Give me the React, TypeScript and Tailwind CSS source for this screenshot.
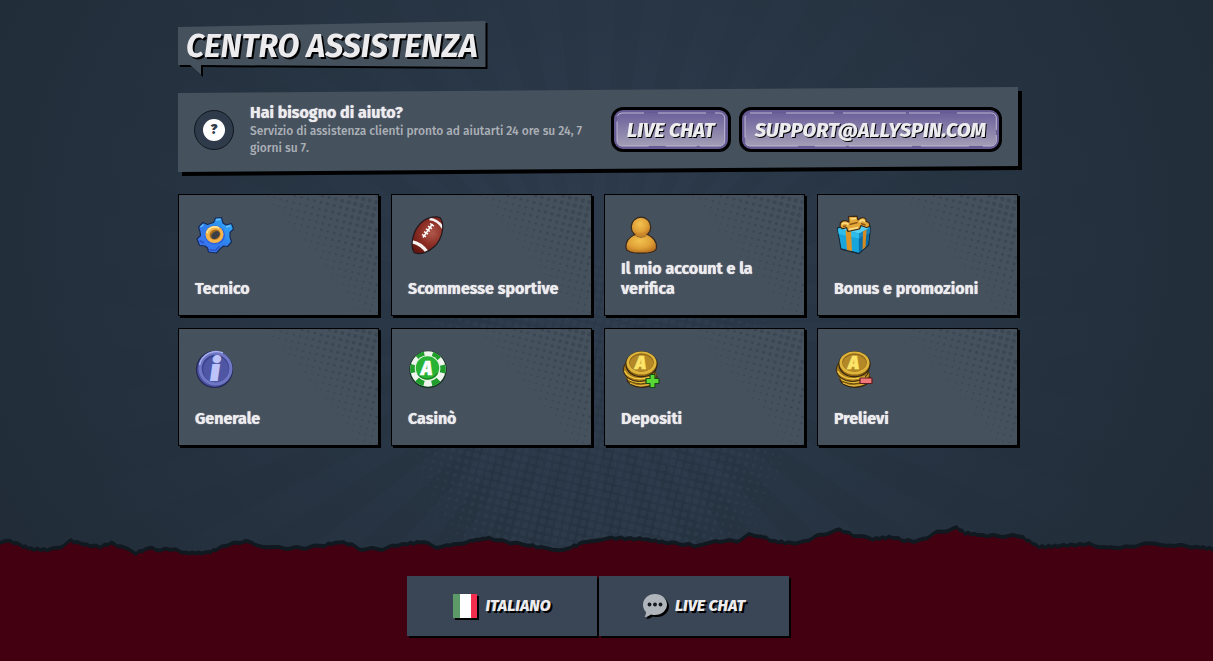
import type { ReactNode } from "react";

// one wedge every 10 degrees, fanned out from the centre of the page
const RAYS = Array.from({ length: 36 }, (_, i) => {
  const from = ((i * 10 - 2) * Math.PI) / 180;
  const to = ((i * 10 + 3) * Math.PI) / 180;
  const at = (a: number) => `${(598 + Math.cos(a) * 900).toFixed(1)},${(330 + Math.sin(a) * 900).toFixed(1)}`;
  return `598,330 ${at(from)} ${at(to)}`;
});

type Dot = { x: number; y: number; r: number };

function halftone(width: number, height: number, pitch: number, radius: (x: number, y: number) => number) {
  const dots: Dot[] = [];
  const c = Math.cos(0.24);
  const s = Math.sin(0.24);
  const n = Math.ceil((width + height) / pitch);
  for (let i = -n; i < n; i++) {
    for (let j = -n; j < n; j++) {
      const x = (i * c - j * s) * pitch;
      const y = (i * s + j * c) * pitch;
      if (x < 0 || y < 0 || x > width || y > height) continue;
      const r = radius(x, y);
      if (r > 0.3) dots.push({ x: +x.toFixed(1), y: +y.toFixed(1), r: +r.toFixed(2) });
    }
  }
  return dots;
}

const CARD_DOTS = halftone(200, 120, 6.7, (x, y) => {
  const t = (x - 85) * 0.75 - y * 0.62;
  return t < 0 ? 0 : Math.min(2.2, 0.6 + t * 0.024);
});
const PAGE_DOTS = halftone(430, 300, 8, (x, y) => {
  const d = Math.hypot((x - 215) / 215, (y - 150) / 230);
  return Math.min(3.2, (1 - d) * 8);
});

// top line of the torn paper: x, y
const TEAR: [number, number][] = [
  [0, 21], [10, 19], [23, 24], [31, 27], [50, 28], [62, 24], [71, 19], [87, 23], [100, 25], [111, 21], [124, 26],
  [136, 31], [152, 25], [158, 28], [172, 27], [186, 31], [205, 31], [216, 28], [228, 23], [245, 19], [255, 23],
  [278, 26], [305, 26], [325, 23], [341, 20], [352, 23], [359, 27], [383, 27], [398, 23], [423, 20], [435, 25],
  [450, 24], [470, 19], [489, 16], [510, 21], [530, 23], [541, 26], [564, 28], [580, 22], [606, 16], [643, 17],
  [668, 21], [683, 22], [697, 24], [716, 19], [737, 19], [749, 13], [761, 14], [772, 19], [788, 21], [803, 20],
  [820, 13], [840, 8], [853, 13], [873, 17], [892, 15], [905, 19], [919, 19], [936, 11], [957, 6], [965, 11],
  [987, 14], [1020, 14], [1039, 25], [1058, 24], [1089, 22], [1101, 25], [1120, 26], [1147, 22], [1170, 23],
  [1197, 25], [1213, 27],
];

function tearPath(drop: number) {
  let d = `M0 ${TEAR[0][1] + drop}`;
  for (let i = 1; i < TEAR.length; i++) {
    const [x0, y0] = TEAR[i - 1];
    const [x1, y1] = TEAR[i];
    const steps = Math.max(1, Math.round((x1 - x0) / 3));
    for (let k = 1; k <= steps; k++) {
      const x = x0 + ((x1 - x0) * k) / steps;
      const noise = Math.sin(x * 12.9) * 0.9;
      d += ` L${x.toFixed(1)} ${(y0 + ((y1 - y0) * k) / steps + noise + drop).toFixed(1)}`;
    }
  }
  return `${d} V41 H0 Z`;
}

function Backdrop() {
  return (
    <svg
      className="pointer-events-none absolute inset-0 -z-10 h-full w-full"
      viewBox="0 0 1213 661"
      preserveAspectRatio="xMidYMid slice"
      aria-hidden="true"
    >
      <defs>
        <radialGradient id="glow" cx="598" cy="270" r="700" gradientUnits="userSpaceOnUse" gradientTransform="scale(1 .85)">
          <stop offset="0" stopColor="#2d3a4b" />
          <stop offset=".5" stopColor="#263341" />
          <stop offset="1" stopColor="#212c38" />
        </radialGradient>
        <radialGradient id="ray" cx="598" cy="330" r="560" gradientUnits="userSpaceOnUse">
          <stop offset="0" stopColor="#33445a" stopOpacity=".2" />
          <stop offset=".5" stopColor="#33445a" stopOpacity=".1" />
          <stop offset="1" stopColor="#33445a" stopOpacity="0" />
        </radialGradient>
      </defs>
      <rect width="1213" height="661" fill="url(#glow)" />
      {RAYS.map((points) => (
        <polygon key={points} points={points} fill="url(#ray)" />
      ))}
      <g transform="translate(384 260)" fill="#3b4a5c" opacity=".26">
        {PAGE_DOTS.map((p) => (
          <circle key={`${p.x}-${p.y}`} cx={p.x} cy={p.y} r={p.r} />
        ))}
      </g>
    </svg>
  );
}

function GearIcon() {
  return (
    <>
      <defs>
        <linearGradient id="gear" x1="0" y1="1" x2="1" y2="0">
          <stop offset="0" stopColor="#3f6df0" />
          <stop offset=".5" stopColor="#2f80ee" />
          <stop offset="1" stopColor="#2fb4f6" />
        </linearGradient>
      </defs>
      <path
        d="M18.500 7.500 L20.500 3 L26.500 2.500 L28 8 L31 10 L36.500 8.500 L38.500 14 L35 17.500 L35 22 L36.500 27 L32.500 31.500 L28.500 31 L25.500 33.500 L21.500 38 L13.500 37 L12.500 33 L10 31 L4.500 30.500 L2 24 L5.500 20.500 L5 17 L3.500 12 L8 7.500 L12.500 9.500 Z"
        fill="url(#gear)"
        stroke="#182b55"
        strokeWidth="1.200"
        strokeLinejoin="round"
      />
      <path d="M21 5 L25.500 4.300 M5.500 12 L8.500 9.500 M31 12 L35.500 10.800" stroke="#6cc3ff" strokeWidth="1.300" />
      <path d="M14.500 34.500 L20.500 35.500 L24.500 31 M4.500 25.500 L9 28" stroke="#2a55c8" strokeWidth="1.500" fill="none" />
      <ellipse cx="20" cy="20" rx="10" ry="9.500" fill="#2f62dc" />
      <ellipse cx="19.500" cy="19.300" rx="9" ry="8.600" fill="#f3b64c" />
      <path d="M12 18 a8 7.500 0 0 1 12-5" stroke="#ffe29a" strokeWidth="1.600" fill="none" />
      <ellipse cx="19.800" cy="19.600" rx="5.600" ry="5" fill="#a96d20" transform="rotate(-35 20 19.300)" />
      <ellipse cx="20.500" cy="20" rx="4.600" ry="3.300" fill="#3b3f48" transform="rotate(-40 20.500 20)" />
    </>
  );
}

const BALL_SHAPE = "M6 37.500 C2 31 4.500 17 11.500 9.500 C17 3 27 0 32.500 3 C37 10 34.500 23 27 31 C21 37 12 40.500 6 37.500 Z";

function BallIcon() {
  return (
    <>
      <defs>
        <radialGradient id="ball" cx=".6" cy=".45" r=".6">
          <stop offset="0" stopColor="#b0574a" />
          <stop offset=".5" stopColor="#8c2e25" />
          <stop offset="1" stopColor="#64160f" />
        </radialGradient>
        <clipPath id="ball-clip">
          <path d={BALL_SHAPE} />
        </clipPath>
      </defs>
      <g clipPath="url(#ball-clip)">
        <rect width="40" height="40" fill="url(#ball)" />
        <path d="M3 26.500 Q13 28 19.500 37.500" stroke="#f7f2f2" strokeWidth="3.400" fill="none" />
        <path d="M21.500 4 Q30 5 35 13" stroke="#f7f2f2" strokeWidth="2.600" fill="none" />
      </g>
      <path d="M24.500 9 L15 22.500" stroke="#fff" strokeWidth="1.500" />
      <path d="M22 8.500 l4 2.600 M20 11.200 l4 2.600 M18 13.900 l4 2.600 M16 16.600 l4 2.600 M14 19.300 l4 2.600" stroke="#fff" strokeWidth="1.400" />
      <path d={BALL_SHAPE} fill="none" stroke="#231a20" strokeWidth="1.200" />
    </>
  );
}

function PersonIcon() {
  return (
    <>
      <defs>
        <radialGradient id="person" cx=".45" cy=".35" r=".65">
          <stop offset="0" stopColor="#f3c250" />
          <stop offset=".6" stopColor="#dfa036" />
          <stop offset="1" stopColor="#b9701e" />
        </radialGradient>
      </defs>
      <path
        d="M14 19.500 C8 22 4.500 27 5 33 C5.500 36.500 12 38.200 20 38.200 C29 38.200 35 37 35.500 33 C36 27 32 22 26.500 19.500 Z"
        fill="url(#person)"
        stroke="#33291f"
        strokeWidth="1.200"
      />
      <circle cx="20" cy="12" r="9.800" fill="url(#person)" stroke="#33291f" strokeWidth="1.200" />
      <path d="M14 20.500 Q20 23.500 26.500 20.500 L25 19 H15 Z" fill="#c98529" />
    </>
  );
}

function GiftIcon() {
  return (
    <>
      <path d="M3.500 13 L20 9 L36.500 12 L34.500 30 L25 38.500 L7 34 Z" fill="#1795cf" stroke="#152a3b" strokeWidth="1.300" strokeLinejoin="round" />
      <path d="M4 13.500 L20 9.500 L36 12.500 L25.500 18.500 Z" fill="#54d0f4" />
      <path d="M5 19 L24.500 23 L24.500 37.500 L7.500 33 Z" fill="#18a5dc" />
      <path d="M25 23 L35.500 17.500 L34 29.500 L25 37.500 Z" fill="#0c6ca5" />
      <path d="M3.800 13.500 L25 18.500 L25 23.500 L4.500 19 Z" fill="#2dbdea" />
      <path d="M25 18.500 L36.300 12.500 L35.800 17.800 L25 23.500 Z" fill="#1485bf" />
      <path d="M11.500 15.500 L17 16.500 L18 36 L13 35 Z" fill="#dc9427" />
      <path d="M29 16.500 L32.500 14.500 L31.500 32 L28.500 34.800 Z" fill="#d78a20" />
      <path
        d="M6 10.500 C6 5.500 10.500 4.500 15 7 L14.500 1.500 L23 1.200 L24 5 C27 1.500 33 2 32 6.500 C36.500 7 37 12.500 32.500 12.500 L27 10.500 L25.500 14 L14 16.500 L12.500 12.500 C9 14.500 6 13.500 6 10.500 Z"
        fill="#e3a838"
        stroke="#3a2a1b"
        strokeWidth="1.200"
        strokeLinejoin="round"
      />
      <path d="M8 9.500 Q10.500 6.500 14.500 9.500 M25.500 7 Q28.500 3.500 31 6.500 M16.500 4 L22 3.500 M15 14.500 L24 12.500" stroke="#ffe08a" strokeWidth="1.600" fill="none" />
      <path d="M15.500 9.500 L23.500 7.500 M27 8.500 L31.500 10 M9 11.500 L12 11" stroke="#8a5518" strokeWidth="1.500" />
    </>
  );
}

function InfoIcon() {
  return (
    <>
      <circle cx="19.500" cy="20.500" r="18" fill="#4a4f9f" stroke="#242952" strokeWidth="1.200" />
      <circle cx="20.500" cy="19.500" r="17" fill="#6f77c4" />
      <path d="M4.500 16 A17 17 0 0 1 28 4" stroke="#a7aff0" strokeWidth="1.500" fill="none" />
      <circle cx="20.500" cy="19.500" r="13.700" fill="#3d4490" />
      <circle cx="21" cy="20.500" r="12.700" fill="#4f57a5" />
      <text
        x="20"
        y="30.500"
        textAnchor="middle"
        fontSize="29"
        className="font-['Fira_Sans',Roboto,sans-serif] font-black italic"
        fill="#bcc4fa"
        stroke="#bcc4fa"
        strokeWidth="2"
      >
        i
      </text>
    </>
  );
}

function ChipIcon() {
  return (
    <>
      <circle cx="20" cy="20.500" r="18.700" fill="#12351f" />
      <circle cx="20" cy="20" r="17.700" fill="#f0f4ee" />
      <circle cx="20" cy="20" r="15" fill="none" stroke="#1f9e2c" strokeWidth="5.600" strokeDasharray="7.850 7.850" transform="rotate(-15 20 20)" />
      <circle cx="19.500" cy="19" r="12.800" fill="#e3f3df" />
      <circle cx="19.500" cy="19" r="11.700" fill="#28b335" />
      <path d="M10 25 A11.500 11.500 0 0 0 29.500 24" stroke="#16801f" strokeWidth="1.300" fill="none" />
      <text
        x="18.500"
        y="25.500"
        textAnchor="middle"
        fontSize="19"
        className="font-['Fira_Sans',Roboto,sans-serif] font-black italic"
        fill="#fff"
        stroke="#fff"
        strokeWidth=".4"
      >
        A
      </text>
    </>
  );
}

function CoinsIcon({ children }: { children: ReactNode }) {
  return (
    <>
      <ellipse cx="21" cy="29.500" rx="15" ry="8.800" fill="#9c6f14" stroke="#2f2514" strokeWidth="1.200" />
      <path d="M9 34 Q21 40 33 33" stroke="#dcb23a" strokeWidth="1.300" fill="none" />
      <ellipse cx="20" cy="26" rx="15.500" ry="8.800" fill="#c08f20" stroke="#4f380f" strokeWidth=".8" />
      <path d="M7 30.500 Q20 37 33 30" stroke="#e4bd3b" strokeWidth="1.200" fill="none" />
      <ellipse cx="18.500" cy="20.500" rx="16.300" ry="12" fill="#a97916" stroke="#2f2514" strokeWidth="1" />
      <path d="M3.500 22 Q10 33.500 31 28" stroke="#f0cc4b" strokeWidth="1.500" fill="none" />
      <ellipse cx="20.500" cy="15.300" rx="15.600" ry="12.500" fill="#8a6114" stroke="#2f2514" strokeWidth="1.200" />
      <ellipse cx="20.500" cy="14" rx="15" ry="11.500" fill="#dfb43a" />
      <ellipse cx="20.500" cy="13.500" rx="12.300" ry="9.200" fill="#8f681a" />
      <ellipse cx="20.500" cy="14.200" rx="11.600" ry="8.500" fill="#b48827" />
      <text
        x="19.500"
        y="20"
        textAnchor="middle"
        fontSize="18"
        className="font-['Fira_Sans',Roboto,sans-serif] font-black italic"
        fill="#fbe468"
        stroke="#fbe468"
        strokeWidth=".5"
      >
        A
      </text>
      {children}
    </>
  );
}

const TOPICS: { label: string; icon: ReactNode }[] = [
  { label: "Tecnico", icon: <GearIcon /> },
  { label: "Scommesse sportive", icon: <BallIcon /> },
  { label: "Il mio account e la verifica", icon: <PersonIcon /> },
  { label: "Bonus e promozioni", icon: <GiftIcon /> },
  { label: "Generale", icon: <InfoIcon /> },
  { label: "Casinò", icon: <ChipIcon /> },
  {
    label: "Depositi",
    icon: (
      <CoinsIcon>
        <path
          d="M29 25.500 h5 v4 h4 v5 h-4 v4 h-5 v-4 h-4 v-5 h4 Z"
          fill="#58d836"
          stroke="#1c4a16"
          strokeWidth="1.200"
          strokeLinejoin="round"
        />
      </CoinsIcon>
    ),
  },
  {
    label: "Prelievi",
    icon: (
      <CoinsIcon>
        <rect x="26" y="29" width="12" height="5.500" rx=".6" fill="#f17878" stroke="#5e1a1f" strokeWidth="1.200" />
      </CoinsIcon>
    ),
  },
];

function TopicCard({ label, icon }: { label: string; icon: ReactNode }) {
  return (
    <a
      href="#"
      className="relative isolate flex min-h-[118px] flex-col justify-between border border-black bg-[#46515e] p-4 shadow-[2px_2px_0_#000]"
    >
      <svg
        className="pointer-events-none absolute inset-0 -z-10 h-full w-full"
        viewBox="0 0 200 120"
        preserveAspectRatio="xMaxYMid slice"
        fill="#3c4754"
        aria-hidden="true"
      >
        {CARD_DOTS.map((p) => (
          <circle key={`${p.x}-${p.y}`} cx={p.x} cy={p.y} r={p.r} />
        ))}
      </svg>
      <span className="flex h-12 w-10 items-center">
        <svg className="h-10 w-10" viewBox="0 0 40 40" aria-hidden="true">
          {icon}
        </svg>
      </span>
      <span className="text-base leading-5 font-bold text-shadow-[0_0_1px_#ececee]">{label}</span>
    </a>
  );
}

function PurpleButton({ children }: { children: ReactNode }) {
  return (
    <button type="button" className="h-[45px] shrink-0 rounded-xl border-[3px] border-black bg-[#675b94] p-[3px]">
      <span className="relative flex h-full items-center rounded-md bg-linear-to-b from-[#6c609a] to-[#a39eb6] px-2.5 text-xl font-extrabold italic text-shadow-[1px_1px_0_#000]">
        {/* worn outline with gaps */}
        <svg className="absolute inset-0 h-full w-full overflow-visible" aria-hidden="true">
          <rect
            width="100%"
            height="100%"
            rx="5"
            fill="none"
            stroke="#bdb8cf"
            strokeWidth="1"
            strokeDasharray="22 14 48 9 63 3 31 17 54 5"
          />
        </svg>
        <span className="relative">{children}</span>
      </span>
    </button>
  );
}

function FooterButton({ icon, children }: { icon: ReactNode; children: ReactNode }) {
  return (
    <button
      type="button"
      className="flex h-15 w-[190px] items-center justify-center gap-2 bg-[#3a4655] text-base font-extrabold italic shadow-[2px_2px_0_#000] text-shadow-[2px_2px_0_#000]"
    >
      {icon}
      {children}
    </button>
  );
}

export default function App() {
  return (
    <div className="relative isolate flex min-h-screen flex-col overflow-hidden bg-[#222d39] font-['Fira_Sans',Roboto,sans-serif] text-[#ececee]">
      <Backdrop />

      <main className="flex-1 pt-[21px] pr-[17px] pb-[74px]">
        <div className="mx-auto w-full max-w-[840px]">
          <div className="w-fit drop-shadow-[2px_2px_0_#000]">
            <h1 className="h-[54px] bg-[#46515e] px-2 text-[32px] leading-[50px] font-bold italic [clip-path:polygon(0_6px,100%_0,100%_46px,23px_44px,23px_54px,12px_44px,0_44px)] text-shadow-[2px_2px_0_#000]">
              CENTRO ASSISTENZA
            </h1>
          </div>

          {/* help banner */}
          <div className="mt-3 drop-shadow-[4px_4px_0_#000]">
            <section className="flex h-[85px] items-center gap-4 bg-[#46515e] px-4 [clip-path:polygon(0_6px,100%_0,100%_79px,0_100%)]">
              <span className="flex size-10 shrink-0 items-center justify-center rounded-full border border-[#10161d] bg-[#2f3b4b]">
                <span className="flex size-[22px] items-center justify-center rounded-full bg-white text-sm font-black text-[#2f3b4b]">
                  ?
                </span>
              </span>
              <div className="min-w-0 flex-1 pr-2">
                <h2 className="text-base leading-5 font-bold text-shadow-[0_0_1px_#ececee]">Hai bisogno di aiuto?</h2>
                <p className="text-xs leading-[17px] font-medium text-[#abb0b6]">
                  Servizio di assistenza clienti pronto ad aiutarti 24 ore su 24, 7 giorni su 7.
                </p>
              </div>
              <div className="flex gap-2">
                <PurpleButton>LIVE CHAT</PurpleButton>
                <PurpleButton>SUPPORT@ALLYSPIN.COM</PurpleButton>
              </div>
            </section>
          </div>

          <nav className="mt-[22px] grid grid-cols-4 gap-3" aria-label="Centro assistenza">
            {TOPICS.map((t) => (
              <TopicCard key={t.label} label={t.label} icon={t.icon} />
            ))}
          </nav>
        </div>
      </main>

      <footer>
        <svg className="block h-10 w-full" viewBox="0 0 1213 40" preserveAspectRatio="none" aria-hidden="true">
          <path d={tearPath(0)} fill="#101820" />
          <path d={tearPath(4)} fill="#430010" />
        </svg>
        <div className="flex justify-center gap-0.5 bg-[#430010] pt-4 pr-[17px] pb-[25px]">
          <FooterButton
            icon={
              <span className="flex size-6 shadow-[2px_2px_0_#000]">
                <span className="w-[7px] bg-[#5c9a68]" />
                <span className="flex-1 bg-white" />
                <span className="w-[6px] bg-[#f22d4e]" />
              </span>
            }
          >
            ITALIANO
          </FooterButton>
          <FooterButton
            icon={
              <svg className="h-6 w-6 overflow-visible drop-shadow-[2px_2px_0_#000]" viewBox="0 0 24 24" aria-hidden="true">
                <path
                  d="M12 0 C5.400 0 0 4.700 0 10.500 C0 14 1.500 16.500 3 18 C3 20 2.500 21.500 1.500 23 C4.500 22.800 6.500 21.500 8 20.500 C9.300 20.900 10.700 21 12 21 C18.600 21 24 16.300 24 10.500 C24 4.700 18.600 0 12 0 Z"
                  fill="#b0b5bc"
                />
                <circle cx="6.500" cy="10.500" r="1.900" fill="#15191f" />
                <circle cx="12" cy="10.500" r="1.900" fill="#15191f" />
                <circle cx="17.500" cy="10.500" r="1.900" fill="#15191f" />
              </svg>
            }
          >
            LIVE CHAT
          </FooterButton>
        </div>
      </footer>
    </div>
  );
}
